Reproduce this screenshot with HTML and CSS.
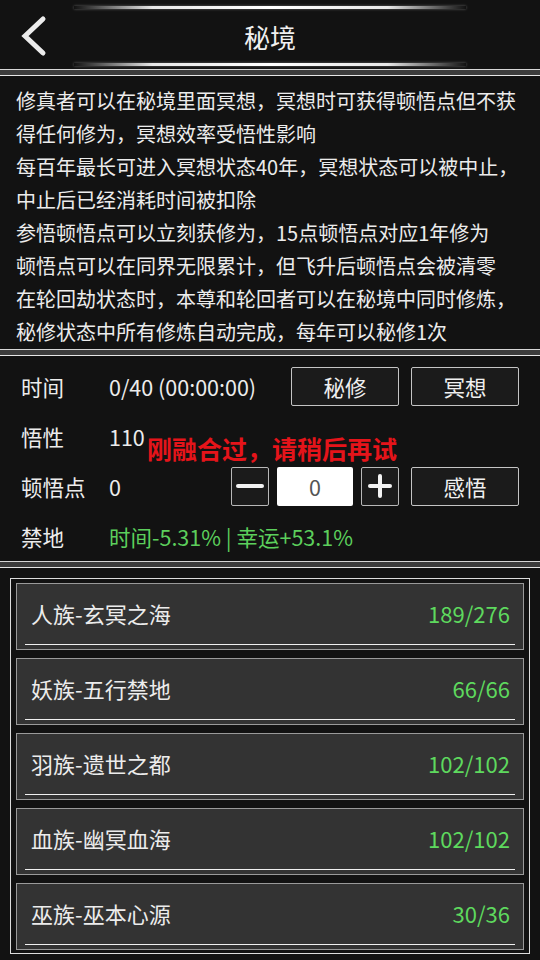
FILE: index.html
```html
<!DOCTYPE html>
<html lang="zh">
<head>
    <meta charset="UTF-8">
    <meta name="viewport" content="width=device-width, initial-scale=1.0">
    <title>秘境</title>
    <link rel="stylesheet" href="styles.css">
</head>
<body>
    <div class="header">
        <div class="back">
            <svg width="28" height="42" viewBox="0 0 28 42">
                <polyline points="23,4 5,21 23,38" fill="none" stroke="#ececec" stroke-width="5" stroke-linecap="round" stroke-linejoin="miter"/>
            </svg>
        </div>
        <div class="title-wrap">
            <div class="glow"></div>
            <h1 class="title">秘境</h1>
            <div class="glow"></div>
        </div>
        <div></div>
    </div>
    <div class="sep"></div>

    <div class="intro">
        修真者可以在秘境里面冥想，冥想时可获得顿悟点但不获<br>
        得任何修为，冥想效率受悟性影响<br>
        每百年最长可进入冥想状态40年，冥想状态可以被中止，<br>
        中止后已经消耗时间被扣除<br>
        参悟顿悟点可以立刻获修为，15点顿悟点对应1年修为<br>
        顿悟点可以在同界无限累计，但飞升后顿悟点会被清零<br>
        在轮回劫状态时，本尊和轮回者可以在秘境中同时修炼，<br>
        秘修状态中所有修炼自动完成，每年可以秘修1次
    </div>
    <div class="sep"></div>

    <div class="stats">
        <div class="row">
            <span class="label">时间</span>
            <span class="value">0/40 (00:00:00)</span>
            <button class="btn">秘修</button>
            <button class="btn">冥想</button>
        </div>
        <div class="row">
            <span class="label">悟性</span>
            <span class="value">110</span>
        </div>
        <div class="row">
            <span class="label">顿悟点</span>
            <span class="value">0</span>
            <div class="stepper">
                <button class="step">
                    <svg width="28" height="28" viewBox="0 0 28 28"><line x1="2" y1="14" x2="26" y2="14" stroke="#f2f2f2" stroke-width="4" stroke-linecap="round"/></svg>
                </button>
                <div class="num">0</div>
                <button class="step">
                    <svg width="24" height="24" viewBox="0 0 24 24"><line x1="2" y1="12" x2="22" y2="12" stroke="#f2f2f2" stroke-width="4" stroke-linecap="round"/><line x1="12" y1="2" x2="12" y2="22" stroke="#f2f2f2" stroke-width="4" stroke-linecap="round"/></svg>
                </button>
            </div>
            <button class="btn">感悟</button>
        </div>
        <div class="row">
            <span class="label">禁地</span>
            <span class="value green">时间-5.31% | 幸运+53.1%</span>
        </div>
        <div class="toast">刚融合过，请稍后再试</div>
    </div>
    <div class="sep"></div>

    <div class="list-panel">
        <div class="list">
            <div class="card">
                <div class="card-row"><span>人族-玄冥之海</span><span class="count">189/276</span></div>
                <div class="card-line"></div>
            </div>
            <div class="card">
                <div class="card-row"><span>妖族-五行禁地</span><span class="count">66/66</span></div>
                <div class="card-line"></div>
            </div>
            <div class="card">
                <div class="card-row"><span>羽族-遗世之都</span><span class="count">102/102</span></div>
                <div class="card-line"></div>
            </div>
            <div class="card">
                <div class="card-row"><span>血族-幽冥血海</span><span class="count">102/102</span></div>
                <div class="card-line"></div>
            </div>
            <div class="card">
                <div class="card-row"><span>巫族-巫本心源</span><span class="count">30/36</span></div>
                <div class="card-line"></div>
            </div>
        </div>
    </div>
</body>
</html>
```

FILE: styles.css
```css
* {
    box-sizing: border-box;
}
body {
    margin: 0;
    width: 540px;
    height: 960px;
    overflow: hidden;
    background-color: #121212;
    color: #ececec;
    font-family: "Noto Sans CJK SC", "Noto Sans", sans-serif;
}
.header {
    display: grid;
    grid-template-columns: 74px 392px 74px;
    height: 69px;
}
.back {
    display: flex;
    align-items: center;
    padding: 0 0 0 20px;
    margin-top: 2px;
}
.title-wrap {
    display: flex;
    flex-direction: column;
    justify-content: space-between;
    padding: 6px 0 3px;
}
.glow {
    height: 3px;
    background: linear-gradient(to right, rgba(255,255,255,0), rgba(255,255,255,0.9) 20%, #fff 50%, rgba(255,255,255,0.9) 80%, rgba(255,255,255,0));
    box-shadow: 0 0 3px rgba(255, 255, 255, 0.35);
}
.title {
    margin: 2px 0 0;
    font-size: 26px;
    font-weight: normal;
    text-align: center;
    line-height: 30px;
    color: #f0f0f0;
}
.sep {
    height: 7px;
    background: #3c3c3c;
    border-top: 1px solid #d6d6d6;
    border-bottom: 1px solid #e6e6e6;
}
.intro {
    padding: 8px 16px 0;
    height: 273px;
    font-size: 20px;
    line-height: 33px;
    white-space: nowrap;
    color: #ececec;
}
.stats {
    position: relative;
    padding-top: 5px;
    height: 205px;
}
.row {
    display: flex;
    align-items: center;
    gap: 12px;
    height: 50px;
    padding: 0 21px;
    font-size: 21.5px;
}
.label {
    width: 76px;
    flex: none;
}
.value {
    flex: 1;
}
.green {
    color: #5ccf5c;
}
.btn {
    width: 108px;
    height: 39px;
    border: 1px solid #c4c4c4;
    border-radius: 2px;
    background: #1b1b1b;
    color: #f0f0f0;
    font-family: inherit;
    font-size: 21.5px;
    padding: 0;
}
.stepper {
    display: flex;
    gap: 8px;
}
.step {
    width: 38px;
    height: 39px;
    border: 1px solid #b8b8b8;
    border-radius: 2px;
    background: #1b1b1b;
    padding: 0;
    display: flex;
    align-items: center;
    justify-content: center;
}
.num {
    width: 76px;
    height: 39px;
    background: #fff;
    border-radius: 2px;
    color: #555;
    font-size: 21.5px;
    line-height: 39px;
    text-align: center;
}
.toast {
    position: absolute;
    left: 147px;
    top: 80px;
    font-size: 25px;
    line-height: 25px;
    font-weight: bold;
    color: #e5141a;
    white-space: nowrap;
}
.list-panel {
    padding: 10px 10px 0;
}
.list {
    height: 376px;
    overflow: hidden;
    border: 1px solid #dcdcdc;
    padding: 4px 5px;
    display: flex;
    flex-direction: column;
    gap: 8px;
}
.card {
    flex: none;
    height: 67px;
    display: flex;
    flex-direction: column;
    background: #333;
    border: 1px solid #9a9a9a;
}
.card-row {
    flex: 1;
    display: flex;
    align-items: center;
    justify-content: space-between;
    padding: 0 13px 3px 14px;
    font-size: 22px;
    color: #ececec;
}
.count {
    color: #5ed95e;
}
.card-line {
    height: 1px;
    margin: 0 8px 4px;
    background: #f0f0f0;
}
```
